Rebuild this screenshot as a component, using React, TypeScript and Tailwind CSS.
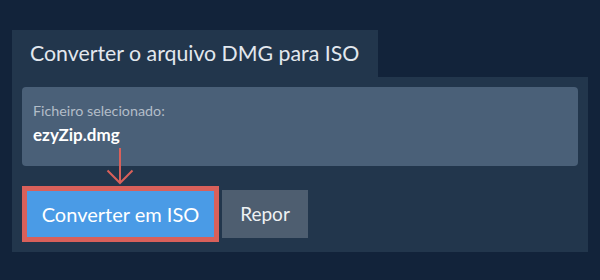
export default function App() {
  return (
    <div
      className="relative w-[600px] h-[280px] bg-[#12233a] pt-[30px] px-[12px] overflow-hidden"
      style={{ fontFamily: "Lato, 'Noto Sans', sans-serif" }}
    >
      <div className="inline-flex items-center h-[47px] pl-[18px] pr-[19px] bg-[#22364c] text-[21.3px] text-[#e3e8ee]">
        Converter o arquivo DMG para ISO
      </div>
      <div className="bg-[#22364c] px-[10px] pt-[10px] pb-[10px]">
        <div className="h-[79px] rounded-[4px] bg-[#4a6078] px-[11px] pt-[15px]">
          <div className="text-[14.3px] leading-[17px] text-[#b3bdc8]">Ficheiro selecionado:</div>
          <div className="mt-[6px] text-[17px] leading-[19px] font-bold text-white">ezyZip.dmg</div>
        </div>
        <div className="mt-[20px] flex items-center gap-[3px]">
          <div className="border-[5px] border-[#d9605a]">
            <button className="w-[187px] h-[46px] bg-[#4a9be6] text-white text-[20px]">
              Converter em ISO
            </button>
          </div>
          <button className="w-[86px] h-[48px] bg-[#4e5e70] text-[#eef1f4] text-[19px]">
            Repor
          </button>
        </div>
      </div>
      <svg
        className="absolute left-[106px] top-[147px]"
        width="28"
        height="38"
        viewBox="0 0 28 38"
        fill="none"
        stroke="#d9605a"
        strokeWidth="2"
      >
        <path d="M14 1 V36" />
        <path d="M1.5 23.5 L14 36 L26.5 23.5" />
      </svg>
    </div>
  );
}
